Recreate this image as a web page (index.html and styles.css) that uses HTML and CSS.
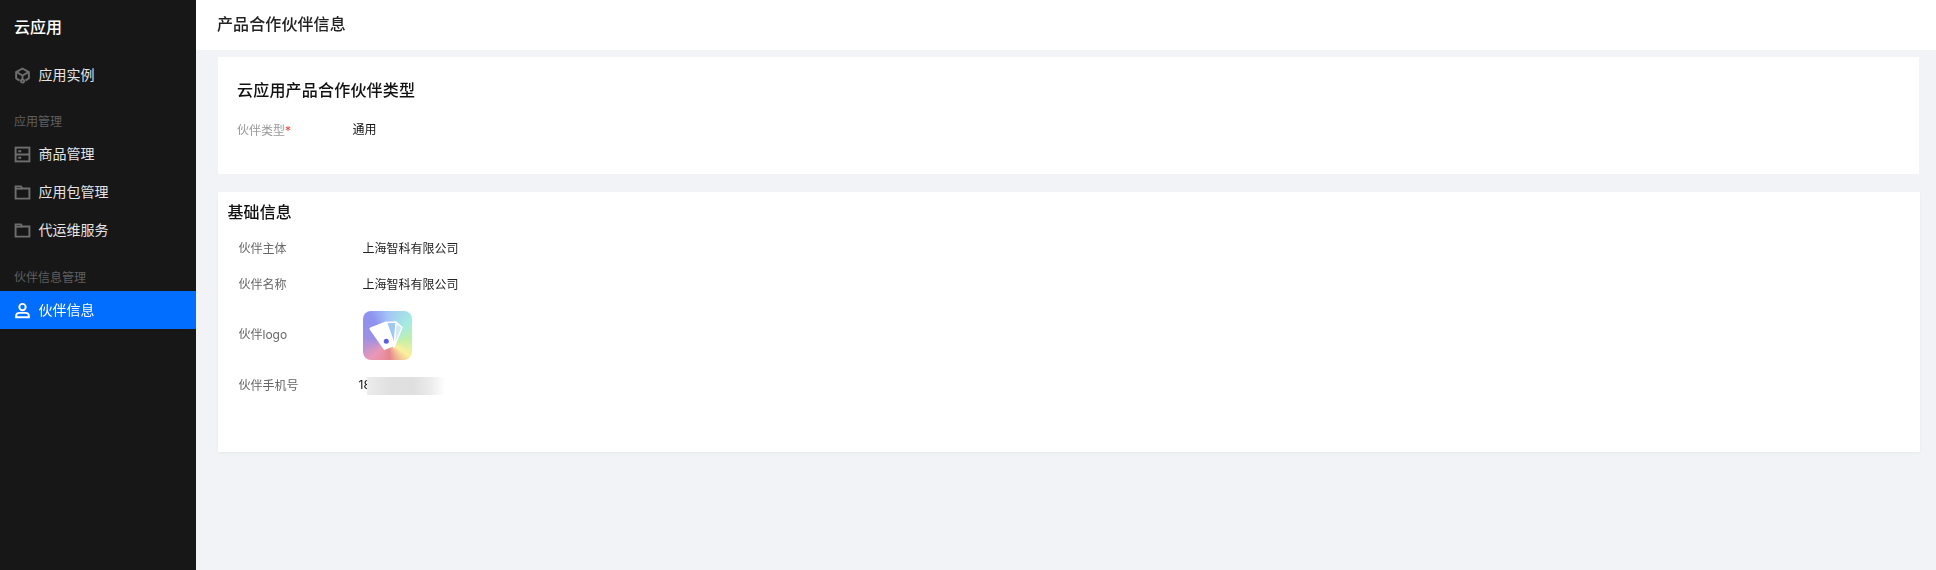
FILE: index.html
```html
<!DOCTYPE html>
<html lang="zh-CN">
<head>
<meta charset="utf-8">
<title>产品合作伙伴信息</title>
<link rel="stylesheet" href="styles.css">
</head>
<body>
<div class="app">
  <aside class="sidebar">
    <div class="brand">云应用</div>
    <nav class="nav">
      <a class="nav-item">
        <svg class="nav-icon" viewBox="0 0 16 16" fill="none" stroke="currentColor" stroke-width="1.8"><path d="M5.200 12.800 2 10.600V4.800L8 1.400l6 3.400v5.800l-3.200 2.200"/><path d="M2.400 4.800 8 8l5.600-3.200M8 8v3.200"/><circle cx="8" cy="13.200" r="1.500"/></svg>
        <span class="nav-text">应用实例</span>
      </a>
      <div class="nav-group nav-group-first">应用管理</div>
      <a class="nav-item">
        <svg class="nav-icon" viewBox="0 0 16 16" fill="none" stroke="currentColor" stroke-width="1.800"><rect x="1.500" y="1.500" width="13" height="13"/><path d="M1.500 8h13M4 5h2.800M4 11h2.800"/></svg>
        <span class="nav-text">商品管理</span>
      </a>
      <a class="nav-item">
        <svg class="nav-icon" viewBox="0 0 16 16" fill="none" stroke="currentColor" stroke-width="1.800"><path d="M1.500 2.200h5l1.400 2h6.600v9.600h-13Z"/><path d="M1.500 4.400h6.400"/></svg>
        <span class="nav-text">应用包管理</span>
      </a>
      <a class="nav-item">
        <svg class="nav-icon" viewBox="0 0 16 16" fill="none" stroke="currentColor" stroke-width="1.800"><path d="M1.500 2.200h5l1.400 2h6.600v9.600h-13Z"/><path d="M1.500 4.400h6.400"/></svg>
        <span class="nav-text">代运维服务</span>
      </a>
      <div class="nav-group">伙伴信息管理</div>
      <a class="nav-item is-active">
        <svg class="nav-icon" viewBox="0 0 16 16" fill="none" stroke="currentColor" stroke-width="1.800"><circle cx="8" cy="4.800" r="3"/><path d="M2 14.400v-1.200c0-1.800 1.400-3 3.200-3h5.600c1.800 0 3.200 1.200 3.200 3v1.200Z"/></svg>
        <span class="nav-text">伙伴信息</span>
      </a>
    </nav>
  </aside>
  <main class="main">
    <header class="topbar">产品合作伙伴信息</header>
    <div class="content">
      <section class="card card-type">
        <h2 class="type-title">云应用产品合作伙伴类型</h2>
        <div class="type-row">
          <span class="type-label">伙伴类型<em class="req">*</em></span>
          <span class="type-value">通用</span>
        </div>
      </section>
      <section class="card card-base">
        <h2 class="base-title">基础信息</h2>
        <div class="info-row"><span class="info-label">伙伴主体</span><span class="info-value">上海智科有限公司</span></div>
        <div class="info-row"><span class="info-label">伙伴名称</span><span class="info-value">上海智科有限公司</span></div>
        <div class="info-row info-row-logo">
          <span class="info-label">伙伴logo</span>
          <span class="logo">
            <svg class="logo-mark" viewBox="0 0 49 49">
              <path d="M33 11 39 16.500 31 36Z" fill="#cfeaf4" stroke="#fff" stroke-width="1.400" stroke-linejoin="round"/>
              <path d="M23 11.500 33 11 31 36Z" fill="#9fc8f4" stroke="#fff" stroke-width="1.400" stroke-linejoin="round"/>
              <path d="M7.700 17.700 23 11.700 31 34 21.700 37.700Z" fill="#fff" stroke="#fff" stroke-width="2.400" stroke-linejoin="round"/>
              <circle cx="23.300" cy="30.300" r="2.500" fill="#5a5fdc"/>
            </svg>
          </span>
        </div>
        <div class="info-row info-row-phone">
          <span class="info-label">伙伴手机号</span>
          <span class="phone">18<span class="phone-mask"></span></span>
        </div>
      </section>
    </div>
  </main>
</div>
</body>
</html>
```
FILE: styles.css
```css
* { box-sizing: border-box; }
html, body { margin: 0; height: 100%; }
body {
  font-family: "Inter", "Noto Sans CJK SC", "Liberation Sans", sans-serif;
  background: #f2f3f7;
  color: #1a1a1a;
}
.app { display: flex; height: 570px; overflow: hidden; opacity: .999; }

.sidebar { width: 196px; flex: none; background: #171717; color: #fff; }
.brand { height: 56px; padding: 15px 14px 0; font-size: 16px; line-height: 24px; font-weight: 500; }
.nav { display: flex; flex-direction: column; }
.nav-item {
  display: flex; align-items: center; gap: 9px;
  height: 38px; padding: 0 14px;
  font-size: 14px; color: #e4e4e4;
}
.nav-text { padding-bottom: 2px; margin-left: -.5px; }
.nav-icon { width: 17px; height: 17px; flex: none; color: #6e6e6e; margin-left: -.5px; margin-right: -.5px; }
.nav-group {
  margin-top: 15px; height: 27px; padding: 0 14px;
  font-size: 12px; line-height: 28px; color: #5f5f5f;
}
.nav-group-first { margin-top: 14px; }
.is-active { background: #006eff; color: #fff; }
.is-active .nav-icon { color: #fff; }

.main { flex: 1; min-width: 0; display: flex; flex-direction: column; }
.topbar {
  height: 50px; background: #fff; padding: 0 21px;
  font-size: 16px; letter-spacing: .1px; line-height: 48px; font-weight: 500; color: #222;
}
.content { padding: 7px 16px 0 21.500px; display: flex; flex-direction: column; }
.card { background: #fff; }
.card-type { height: 117px; margin: 0 1px 18px .500px; padding: 21px 19px 0; }
.type-title { margin: 0; font-size: 16px; letter-spacing: .2px; line-height: 24px; font-weight: 500; color: #111; }
.type-row { display: flex; margin-top: 19px; font-size: 12px; line-height: 20px; }
.type-label { width: 115px; color: #999; }
.req { font-style: normal; color: #e54545; }
.type-value { color: #111; margin-top: -1px; margin-left: .5px; }

.card-base { height: 260px; padding: 8px 0 0 10px; box-shadow: 0 1px 3px rgba(0, 0, 0, .06); }
.base-title { margin: 0; font-size: 16px; letter-spacing: .1px; line-height: 24px; font-weight: 500; color: #111; }
.info-row { display: flex; align-items: center; height: 36px; padding-left: 11px; font-size: 12px; }
.base-title + .info-row { margin-top: 6px; }
.info-label { width: 124px; color: #666; padding-bottom: 1px; }
.info-value { color: #222; padding-bottom: 1px; }
.info-row-logo { height: 50px; margin-top: 8px; }
.info-row-logo .info-label { padding-bottom: 3px; }
.info-row-phone { margin-top: 7px; }
.logo {
  display: block; width: 49px; height: 49px; border-radius: 8px; overflow: hidden;
  background: conic-gradient(from 0deg at 52% 62%, #a4c6f6 0deg, #a5ebe0 45deg, #c2f0aa 85deg, #fbf09c 125deg, #e6858e 175deg, #ea98b4 225deg, #9c90e6 280deg, #8e92f0 325deg, #a4c6f6 360deg);
}
.logo-mark { display: block; width: 49px; height: 49px; }
.phone { position: relative; display: block; margin-left: -4px; width: 92px; color: #111; padding-bottom: 1px; }
.phone-mask {
  position: absolute; left: 8px; top: 0; width: 78px; height: 18px;
  background: linear-gradient(90deg, #ececec 0, #e0e0e0 30%, #dfdfdf 60%, #ececec 82%, #fff 100%);
}
```
